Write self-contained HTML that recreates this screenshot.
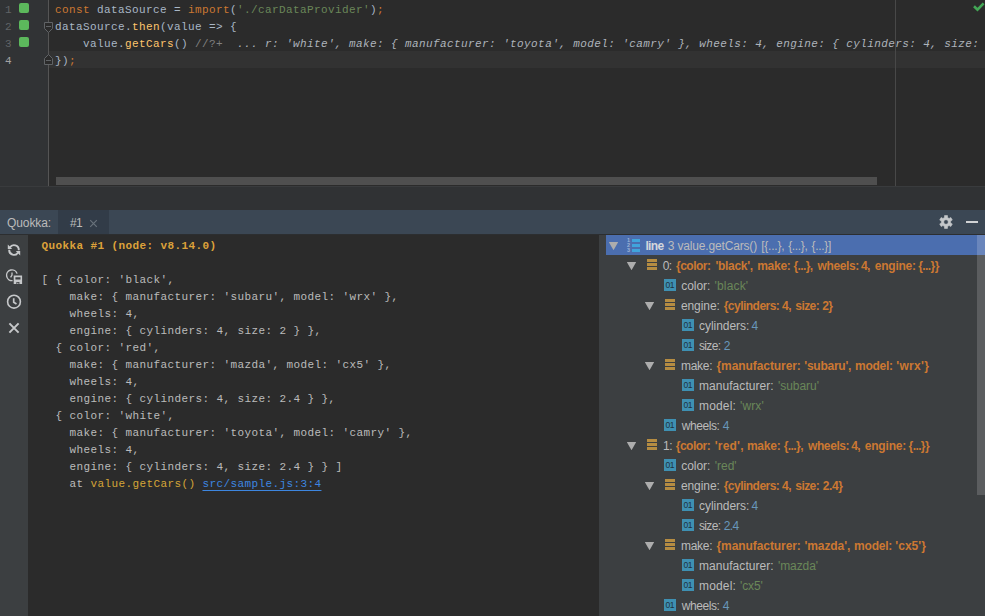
<!DOCTYPE html>
<html><head><meta charset="utf-8"><title>Quokka</title>
<style>
*{box-sizing:border-box;margin:0;padding:0}
html,body{width:985px;height:616px;overflow:hidden;background:#2b2b2b}
body{position:relative;font-family:"Liberation Sans",sans-serif;font-size:12px;color:#bbb}
.mono{font-family:"Liberation Mono",monospace;font-size:11px;letter-spacing:0.4px;white-space:pre}
#editor{position:absolute;left:0;top:0;width:985px;height:187px;background:#2b2b2b;overflow:hidden}
#gutter{position:absolute;left:0;top:0;width:49px;height:186px;background:#313335;border-right:1px solid #555}
.ln{position:absolute;left:5px;width:8px;height:17px;line-height:20px;color:#606366;text-align:left}
.sq{position:absolute;left:19px;width:10px;height:10px;border-radius:2px;background:#5cb85c}
#curline{position:absolute;left:49px;top:51px;width:936px;height:17px;background:#323232}
.cl{position:absolute;left:55px;height:17px;line-height:20px;color:#a9b7c6}
.k{color:#cc7832}.s{color:#6a8759}.f{color:#ffc66d}.c{color:#808080}.iv{color:#aeb4bc;font-style:italic}
#margin{position:absolute;left:895px;top:0;width:1px;height:186px;background:#484848}
#hthumb{position:absolute;left:56px;top:177px;width:821px;height:8px;background:#4f4f4f}
#edborder{position:absolute;left:0;top:186px;width:985px;height:1px;background:#393b3d;z-index:3}
#gap{position:absolute;left:0;top:186px;width:985px;height:24px;background:#303234}
#tabs{position:absolute;left:0;top:210px;width:985px;height:24px;background:#3b4754}
#tab1{position:absolute;left:58px;top:0;width:51px;height:24px;background:#323c48}
#tabline{position:absolute;left:0;top:234px;width:985px;height:1px;background:#2c2e30}
#panel{position:absolute;left:0;top:235px;width:985px;height:381px;background:#3c3f41}
#console{position:absolute;left:28px;top:0;width:571px;height:381px;background:#2b2b2b}
.ol{position:absolute;left:13.4px;height:17px;line-height:20px;color:#bbbbbb}

#tree{position:absolute;left:0;top:0;width:985px;height:381px;overflow:hidden}
#sel{position:absolute;left:606px;top:0;width:371px;height:20px;background:#4b6eaf}
.tx{position:absolute;left:0;width:977px;height:20px;line-height:20px;white-space:nowrap;color:#bbb;font-size:12px}
.tx span{position:absolute;top:0;white-space:pre}
.tx .k{color:#bbb}.tx .L{color:#d4d7dc;font-weight:bold}.tx .b{font-weight:bold;color:#cc7832}.tx .g{color:#6a8759}.tx .n{color:#6897bb}
.ar{position:absolute;width:9.4px;height:8.2px;margin-left:-0.2px;background:#adadad;clip-path:polygon(0 0,100% 0,50% 100%)}
.ib{position:absolute;width:10px;height:11px;background:linear-gradient(#b58c42 0 3px,transparent 3px 4px,#b58c42 4px 7px,transparent 7px 8px,#b58c42 8px 11px)}
.i01{position:absolute;width:12px;height:12px;background:#3e90b2;color:#1f323d;font:normal 8.5px/12.4px "Liberation Sans",sans-serif;text-align:center;font-style:normal;letter-spacing:-0.4px;text-indent:-0.4px}
.il{position:absolute;width:14px;height:15px}
.il u{position:absolute;left:0;width:4px;height:5px;font:bold 5.5px/5px "Liberation Sans",sans-serif;color:#9db3d6;text-decoration:none}
.il u:nth-of-type(1){top:0}.il u:nth-of-type(2){top:5px}.il u:nth-of-type(3){top:10px}
.il s{position:absolute;left:5px;width:8px;height:3px;background:#40a4dc}
.il s:nth-of-type(1){top:1px}.il s:nth-of-type(2){top:6px}.il s:nth-of-type(3){top:11px}
#vthumb{position:absolute;left:977px;top:20px;width:8px;height:240px;background:#5b5d5f}
#vsel{position:absolute;left:977px;top:0;width:8px;height:20px;background:#6a86bc}
</style></head><body>
<div id="editor">
 <div id="gutter"></div>
 <div id="curline"></div>
 <div id="margin"></div>
 <div class="ln mono" style="top:0">1</div><div class="ln mono" style="top:17px">2</div><div class="ln mono" style="top:34px">3</div><div class="ln mono" style="top:51px;color:#a4a3a3">4</div>
 <div class="sq" style="top:3px"></div><div class="sq" style="top:20px"></div><div class="sq" style="top:37px"></div>
 <div class="cl mono" style="top:0"><span class="k">const</span> dataSource = <span class="k">import</span>(<span class="s">'./carDataProvider'</span>)<span class="k">;</span></div>
 <div class="cl mono" style="top:17px">dataSource.<span class="f">then</span>(value =&gt; {</div>
 <div class="cl mono" style="top:34px">    value.<span class="f">getCars</span>() <span class="c">//?+</span>  <span class="iv">... r: 'white', make: { manufacturer: 'toyota', model: 'camry' }, wheels: 4, engine: { cylinders: 4, size: 2.4 } } ]</span></div>
 <div class="cl mono" style="top:51px">})<span class="k">;</span></div>
 <svg id="folds" width="12" height="70" viewBox="0 0 12 70" style="position:absolute;left:43px;top:0">
  <path d="M1.5 22.5h8v6l-4 4l-4-4z" fill="#2b2b2b" stroke="#606366" stroke-width="1"/>
  <path d="M3 26.5h5" stroke="#606366" stroke-width="1"/>
  <path d="M1.5 64.5h8v-6l-4-4l-4 4z" fill="#2b2b2b" stroke="#606366" stroke-width="1"/>
  <path d="M3 60.5h5" stroke="#606366" stroke-width="1"/>
 </svg>
 <svg width="14" height="12" viewBox="0 0 14 12" style="position:absolute;left:971px;top:0"><path d="M3 6.2L6.5 9.6L12.6 3.4" fill="none" stroke="#43a756" stroke-width="2.6"/></svg>
 <div id="hthumb"></div>
 <div id="edborder"></div>
</div>
<div id="gap"></div>
<div id="tabs"><div id="tab1"></div>
 <span style="position:absolute;left:7px;top:1px;line-height:24px;color:#bbb;letter-spacing:-0.1px">Quokka:</span>
 <span style="position:absolute;left:70px;top:1px;line-height:24px;color:#bbb;letter-spacing:-0.7px">#1</span>
 <svg width="9" height="9" viewBox="0 0 9 9" style="position:absolute;left:88.7px;top:9px"><path d="M1.2 1.2L7.8 7.8M7.8 1.2L1.2 7.8" stroke="#69727b" stroke-width="1.2" fill="none"/></svg>
 <svg width="14" height="14" viewBox="0 0 14 14" style="position:absolute;left:939px;top:5px">
  <path fill="#c4c7ca" fill-rule="evenodd" stroke="#c4c7ca" stroke-width="0.6" stroke-linejoin="round" d="M5.47 2.56 L5.52 0.57 L8.48 0.57 L8.53 2.56 L10.08 3.45 L11.83 2.50 L13.31 5.07 L11.61 6.10 L11.61 7.90 L13.31 8.93 L11.83 11.50 L10.08 10.55 L8.53 11.44 L8.48 13.43 L5.52 13.43 L5.47 11.44 L3.92 10.55 L2.17 11.50 L0.69 8.93 L2.39 7.90 L2.39 6.10 L0.69 5.07 L2.17 2.50 L3.92 3.45Z M7 4.7a2.3 2.3 0 1 0 0 4.6a2.3 2.3 0 1 0 0-4.6z"/></svg>
 <div style="position:absolute;left:966px;top:11px;width:12px;height:2px;background:#d0d2d4"></div>
</div>
<div id="tabline"></div>
<div id="panel">
<svg id="tbicons" width="28" height="110" viewBox="0 0 28 110" style="position:absolute;left:0;top:0" fill="none" stroke="#c6c8ca" stroke-width="1.9">
 <!-- refresh: centre (14,15) -->
 <path d="M9.9 12.5A4.8 4.8 0 0 1 18.8 15.2"/>
 <path d="M18.1 17.5A4.8 4.8 0 0 1 9.2 14.8"/>
 <path d="M7.8 9.6v4.4h4.4z M20.2 20.4v-4.4h-4.4z" fill="#c6c8ca" stroke="none"/>
 <!-- clock + save -->
 <path d="M12.6 45.6A5.4 5.4 0 1 1 17.1 38.6" stroke-width="1.4"/>
 <path d="M12 37.4v2.6l-1.4 2.4" stroke-width="1.3"/>
 <path d="M13.7 40.6h8.4v8.5h-8.4z" fill="#c6c8ca" stroke="none"/>
 <path d="M15.4 42.3h5.1v2.2h-5.1z M16.4 46.9h3v2.2h-3z" fill="#3c3f41" stroke="none"/>
 <path d="M17.3 47.8h1.1v1.3h-1.1z" fill="#c6c8ca" stroke="none"/>
 <!-- clock: centre (14,66.7) -->
 <circle cx="14" cy="66.7" r="6.4" stroke-width="1.6"/>
 <path d="M13.7 63.2v4l2.8 1.8" stroke-width="1.7"/>
 <!-- x: centre (14,93) -->
 <path d="M9.4 88.4l9.2 9.2M18.6 88.4l-9.2 9.2" stroke-width="2"/>
</svg>
<div id="console">
 <div class="ol mono" style="top:1px"><span style="color:#dda23a;font-weight:bold">Quokka #1 (node: v8.14.0)</span></div>
 <div class="ol mono" style="top:35px">[ { color: 'black',</div>
 <div class="ol mono" style="top:52px">    make: { manufacturer: 'subaru', model: 'wrx' },</div>
 <div class="ol mono" style="top:69px">    wheels: 4,</div>
 <div class="ol mono" style="top:86px">    engine: { cylinders: 4, size: 2 } },</div>
 <div class="ol mono" style="top:103px">  { color: 'red',</div>
 <div class="ol mono" style="top:120px">    make: { manufacturer: 'mazda', model: 'cx5' },</div>
 <div class="ol mono" style="top:137px">    wheels: 4,</div>
 <div class="ol mono" style="top:154px">    engine: { cylinders: 4, size: 2.4 } },</div>
 <div class="ol mono" style="top:171px">  { color: 'white',</div>
 <div class="ol mono" style="top:188px">    make: { manufacturer: 'toyota', model: 'camry' },</div>
 <div class="ol mono" style="top:205px">    wheels: 4,</div>
 <div class="ol mono" style="top:222px">    engine: { cylinders: 4, size: 2.4 } } ]</div>
 <div class="ol mono" style="top:239px">    at <span style="color:#d4a537">value.getCars()</span> <span style="color:#3d86e0;text-decoration:underline;text-underline-offset:2.5px;text-decoration-thickness:1px">src/sample.js:3:4</span></div>
</div>
<div id="tree">
<div id="sel"></div>
<i class="ar" style="left:609px;top:7px"></i><i class="il" style="left:627px;top:3px"><u>1</u><u>2</u><u>3</u><s></s><s></s><s></s></i><div class="tx" style="top:1px"><span class="L" style="left:645.4px;letter-spacing:-0.60px">line</span> <span class="k" style="left:667.8px;letter-spacing:0.00px">3</span> <span class="k" style="left:677.5px;letter-spacing:-0.17px">value.getCars()</span> <span class="k" style="left:761.2px;letter-spacing:-0.23px">[{...},</span> <span class="k" style="left:788.2px;letter-spacing:-0.34px">{...},</span> <span class="k" style="left:811.6px;letter-spacing:-0.34px">{...}]</span> </div>
<i class="ar" style="left:627px;top:27px"></i><i class="ib" style="left:647px;top:24px"></i><div class="tx" style="top:21px"><span class="k" style="left:662.7px;letter-spacing:-0.57px">0:</span> <span class="b" style="left:676.0px;letter-spacing:-0.50px">{color:</span> <span class="b" style="left:715.5px;letter-spacing:-0.31px">'black',</span> <span class="b" style="left:757.2px;letter-spacing:-0.27px">make:</span> <span class="b" style="left:793.5px;letter-spacing:-0.60px">{...},</span> <span class="b" style="left:817.5px;letter-spacing:-0.39px">wheels:</span> <span class="b" style="left:860.9px;letter-spacing:-0.60px">4,</span> <span class="b" style="left:874.8px;letter-spacing:-0.25px">engine:</span> <span class="b" style="left:918.3px;letter-spacing:-0.60px">{...}}</span> </div>
<i class="i01" style="left:664px;top:44px">01</i><div class="tx" style="top:41px"><span class="k" style="left:681.3px;letter-spacing:-0.06px">color:</span> <span class="g" style="left:714.5px;letter-spacing:0.17px">'black'</span> </div>
<i class="ar" style="left:645px;top:67px"></i><i class="ib" style="left:665px;top:64px"></i><div class="tx" style="top:61px"><span class="k" style="left:680.9px;letter-spacing:-0.07px">engine:</span> <span class="b" style="left:723.7px;letter-spacing:-0.52px">{cylinders:</span> <span class="b" style="left:782.1px;letter-spacing:-0.60px">4,</span> <span class="b" style="left:795.3px;letter-spacing:-0.57px">size:</span> <span class="b" style="left:822.2px;letter-spacing:-0.60px">2}</span> </div>
<i class="i01" style="left:682px;top:84px">01</i><div class="tx" style="top:81px"><span class="k" style="left:699.0px;letter-spacing:-0.05px">cylinders:</span> <span class="n" style="left:751.6px;letter-spacing:0.00px">4</span> </div>
<i class="i01" style="left:682px;top:104px">01</i><div class="tx" style="top:101px"><span class="k" style="left:698.9px;letter-spacing:-0.60px">size:</span> <span class="n" style="left:723.8px;letter-spacing:0.00px">2</span> </div>
<i class="ar" style="left:645px;top:127px"></i><i class="ib" style="left:665px;top:124px"></i><div class="tx" style="top:121px"><span class="k" style="left:680.9px;letter-spacing:-0.24px">make:</span> <span class="b" style="left:716.5px;letter-spacing:-0.08px">{manufacturer:</span> <span class="b" style="left:804.3px;letter-spacing:-0.25px">'subaru',</span> <span class="b" style="left:855.1px;letter-spacing:-0.29px">model:</span> <span class="b" style="left:896.3px;letter-spacing:0.30px">'wrx'}</span> </div>
<i class="i01" style="left:682px;top:144px">01</i><div class="tx" style="top:141px"><span class="k" style="left:699.0px;letter-spacing:0.05px">manufacturer:</span> <span class="g" style="left:778.0px;letter-spacing:-0.04px">'subaru'</span> </div>
<i class="i01" style="left:682px;top:164px">01</i><div class="tx" style="top:161px"><span class="k" style="left:699.0px;letter-spacing:0.16px">model:</span> <span class="g" style="left:740.0px;letter-spacing:0.11px">'wrx'</span> </div>
<i class="i01" style="left:664px;top:184px">01</i><div class="tx" style="top:181px"><span class="k" style="left:681.8px;letter-spacing:-0.44px">wheels:</span> <span class="n" style="left:722.8px;letter-spacing:0.00px">4</span> </div>
<i class="ar" style="left:627px;top:207px"></i><i class="ib" style="left:647px;top:204px"></i><div class="tx" style="top:201px"><span class="k" style="left:663.1px;letter-spacing:-0.60px">1:</span> <span class="b" style="left:675.8px;letter-spacing:-0.52px">{color:</span> <span class="b" style="left:714.8px;letter-spacing:0.20px">'red',</span> <span class="b" style="left:746.9px;letter-spacing:-0.20px">make:</span> <span class="b" style="left:783.8px;letter-spacing:-0.60px">{...},</span> <span class="b" style="left:808.0px;letter-spacing:-0.40px">wheels:</span> <span class="b" style="left:851.3px;letter-spacing:-0.60px">4,</span> <span class="b" style="left:864.7px;letter-spacing:-0.18px">engine:</span> <span class="b" style="left:908.6px;letter-spacing:-0.60px">{...}}</span> </div>
<i class="i01" style="left:664px;top:224px">01</i><div class="tx" style="top:221px"><span class="k" style="left:681.3px;letter-spacing:-0.06px">color:</span> <span class="g" style="left:714.8px;letter-spacing:-0.03px">'red'</span> </div>
<i class="ar" style="left:645px;top:247px"></i><i class="ib" style="left:665px;top:244px"></i><div class="tx" style="top:241px"><span class="k" style="left:680.9px;letter-spacing:-0.07px">engine:</span> <span class="b" style="left:723.7px;letter-spacing:-0.52px">{cylinders:</span> <span class="b" style="left:782.1px;letter-spacing:-0.60px">4,</span> <span class="b" style="left:795.3px;letter-spacing:-0.57px">size:</span> <span class="b" style="left:822.7px;letter-spacing:-0.39px">2.4}</span> </div>
<i class="i01" style="left:682px;top:264px">01</i><div class="tx" style="top:261px"><span class="k" style="left:699.0px;letter-spacing:-0.05px">cylinders:</span> <span class="n" style="left:751.6px;letter-spacing:0.00px">4</span> </div>
<i class="i01" style="left:682px;top:284px">01</i><div class="tx" style="top:281px"><span class="k" style="left:698.9px;letter-spacing:-0.60px">size:</span> <span class="n" style="left:723.8px;letter-spacing:-0.60px">2.4</span> </div>
<i class="ar" style="left:645px;top:307px"></i><i class="ib" style="left:665px;top:304px"></i><div class="tx" style="top:301px"><span class="k" style="left:680.9px;letter-spacing:-0.24px">make:</span> <span class="b" style="left:716.5px;letter-spacing:-0.08px">{manufacturer:</span> <span class="b" style="left:804.4px;letter-spacing:-0.06px">'mazda',</span> <span class="b" style="left:854.1px;letter-spacing:-0.23px">model:</span> <span class="b" style="left:895.3px;letter-spacing:0.03px">'cx5'}</span> </div>
<i class="i01" style="left:682px;top:324px">01</i><div class="tx" style="top:321px"><span class="k" style="left:699.0px;letter-spacing:0.05px">manufacturer:</span> <span class="g" style="left:778.0px;letter-spacing:-0.10px">'mazda'</span> </div>
<i class="i01" style="left:682px;top:344px">01</i><div class="tx" style="top:341px"><span class="k" style="left:699.0px;letter-spacing:0.16px">model:</span> <span class="g" style="left:740.0px;letter-spacing:-0.09px">'cx5'</span> </div>
<i class="i01" style="left:664px;top:364px">01</i><div class="tx" style="top:361px"><span class="k" style="left:681.8px;letter-spacing:-0.44px">wheels:</span> <span class="n" style="left:722.8px;letter-spacing:0.00px">4</span> </div>
<div id="vthumb"></div><div id="vsel"></div>
</div>
</div>
</body></html>
